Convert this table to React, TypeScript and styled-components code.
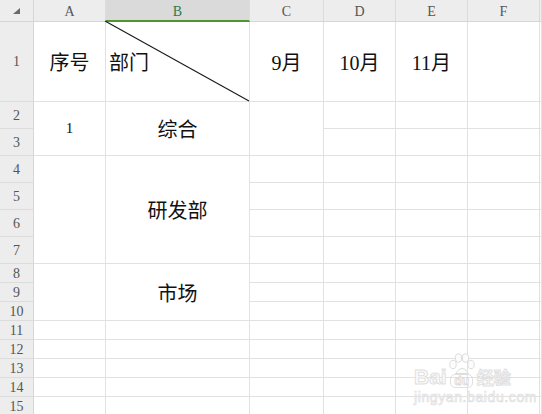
import React from "react";
import styled, { createGlobalStyle } from "styled-components";

const Global = createGlobalStyle`
  html, body { margin: 0; padding: 0; background: #fff; overflow: hidden; }
  body { font-family: "Liberation Serif", "Noto Sans CJK SC", serif; }
  #root { width: 542px; height: 414px; overflow: hidden; }
`;

const COLS = ["A", "B", "C", "D", "E", "F", "G"];
const ROWS = 15;

type Merge = { col: number; row: number; span: number; text?: string; size?: number };

// col index 1 = A ; row index 1 = row 1
const MERGES: Merge[] = [
  { col: 1, row: 2, span: 2, text: "1", size: 15 },
  { col: 2, row: 2, span: 2, text: "综合" },
  { col: 3, row: 2, span: 2 },
  { col: 1, row: 4, span: 4 },
  { col: 2, row: 4, span: 4, text: "研发部" },
  { col: 1, row: 8, span: 3 },
  { col: 2, row: 8, span: 3, text: "市场" },
];

const ROW1: Record<number, string> = { 1: "序号", 3: "9月", 4: "10月", 5: "11月" };

const Sheet = styled.div`
  display: grid;
  grid-template-columns: 34px 72px 144px 74px 72px 72px 72px 1fr;
  grid-template-rows: 22px 80px repeat(6, 27px) repeat(8, 19px);
  width: 542px;
  height: 414px;
  overflow: hidden;
  position: relative;
  background: #fff;
`;

const Corner = styled.div`
  grid-column: 1;
  grid-row: 1;
  background: #ededed;
  border-right: 1px solid #d6d6d6;
  border-bottom: 1px solid #d6d6d6;
  box-sizing: border-box;
  position: relative;
`;

const CornerMark = styled.div`
  position: absolute;
  left: 13px;
  top: 8px;
  width: 7px;
  height: 6px;
  background: #6a6a6a;
  clip-path: polygon(100% 0, 100% 100%, 0 100%);
`;

const ColHead = styled.div<{ $col: number; $active?: boolean }>`
  grid-column: ${(p) => p.$col + 1};
  grid-row: 1;
  box-sizing: border-box;
  background: ${(p) => (p.$active ? "#dadada" : "#ededed")};
  border-right: 1px solid #dcdcdc;
  border-bottom: ${(p) => (p.$active ? "2px solid #4f9633" : "1px solid #d6d6d6")};
  color: ${(p) => (p.$active ? "#2f7a4a" : "#555")};
  font-family: "Liberation Serif", serif;
  font-size: 14px;
  display: flex;
  align-items: center;
  justify-content: center;
  padding-top: 3px;
`;

const RowHead = styled.div<{ $row: number }>`
  grid-column: 1;
  grid-row: ${(p) => p.$row + 1};
  box-sizing: border-box;
  background: #ededed;
  border-right: 1px solid #d6d6d6;
  border-bottom: 1px solid #dcdcdc;
  color: #555;
  font-family: "Liberation Serif", serif;
  font-size: 14px;
  display: flex;
  align-items: center;
  justify-content: center;
  padding-top: 1px;
`;

const Cell = styled.div<{ $col: number; $row: number; $span?: number; $left?: boolean; $size?: number }>`
  grid-column: ${(p) => p.$col + 1};
  grid-row: ${(p) => p.$row + 1} / span ${(p) => p.$span ?? 1};
  box-sizing: border-box;
  border-right: 1px solid #e1e1e1;
  border-bottom: 1px solid #e1e1e1;
  position: relative;
  display: flex;
  align-items: center;
  justify-content: ${(p) => (p.$left ? "flex-start" : "center")};
  padding-left: ${(p) => (p.$left ? "3px" : "0")};
  font-family: "Liberation Serif", "Noto Sans CJK SC", serif;
  font-size: ${(p) => p.$size ?? 20}px;
  color: #111;
  white-space: nowrap;
`;

const Diagonal = styled.svg`
  position: absolute;
  left: -1px;
  top: -1px;
  width: calc(100% + 1px);
  height: calc(100% + 1px);
  overflow: visible;
  pointer-events: none;
`;

const Watermark = styled.div`
  position: absolute;
  left: 414px;
  top: 353px;
  width: 120px;
  display: flex;
  flex-direction: column;
  align-items: flex-start;
  pointer-events: none;
`;

const LogoRow = styled.div`
  display: flex;
  align-items: flex-end;
  height: 35px;
`;

const Outlined = styled.span<{ $size: number }>`
  font-family: "Liberation Sans", "Noto Sans CJK SC", sans-serif;
  font-weight: bold;
  font-size: ${(p) => p.$size}px;
  line-height: 1;
  color: #fcfcfc;
  -webkit-text-stroke: 1px #e0e0e0;
  margin-bottom: 1px;
`;

const PawBox = styled.div`
  display: flex;
  flex-direction: column;
  align-items: center;
  margin: 0 1px;
`;

const DuBox = styled.span`
  font-family: "Liberation Sans", sans-serif;
  font-weight: bold;
  font-size: 12px;
  line-height: 12px;
  color: #fcfcfc;
  -webkit-text-stroke: 0.8px #dadada;
  border: 1px solid #e0e0e0;
  border-radius: 5px;
  padding: 0 3px;
`;

const Url = styled.div`
  font-family: "Liberation Sans", sans-serif;
  font-size: 14px;
  line-height: 12px;
  letter-spacing: 0.6px;
  white-space: nowrap;
  color: #fcfcfc;
  -webkit-text-stroke: 0.7px #dedede;
  margin-top: 3px;
`;

const isCovered = (col: number, row: number) =>
  MERGES.some((m) => m.col === col && row >= m.row && row < m.row + m.span);

export default function App() {
  const cells: React.ReactNode[] = [];
  for (let r = 1; r <= ROWS; r++) {
    for (let c = 1; c <= COLS.length; c++) {
      const merge = MERGES.find((m) => m.col === c && m.row === r);
      if (merge) {
        cells.push(
          <Cell key={`${c}-${r}`} $col={c} $row={r} $span={merge.span} $size={merge.size}>
            {merge.text}
          </Cell>
        );
        continue;
      }
      if (isCovered(c, r)) continue;
      if (r === 1 && c === 2) {
        cells.push(
          <Cell key={`${c}-${r}`} $col={c} $row={r} $left>
            部门
            <Diagonal viewBox="0 0 100 100" preserveAspectRatio="none">
              <line x1="0" y1="0" x2="100" y2="100" stroke="#1a1a1a" strokeWidth="1.1" vectorEffect="non-scaling-stroke" />
            </Diagonal>
          </Cell>
        );
        continue;
      }
      cells.push(
        <Cell key={`${c}-${r}`} $col={c} $row={r}>
          {r === 1 ? ROW1[c] : null}
        </Cell>
      );
    }
  }

  return (
    <>
      <Global />
      <Sheet>
        <Corner>
          <CornerMark />
        </Corner>
        {COLS.map((name, i) => (
          <ColHead key={name} $col={i + 1} $active={name === "B"}>
            {name === "G" ? "" : name}
          </ColHead>
        ))}
        {Array.from({ length: ROWS }, (_, i) => (
          <RowHead key={i} $row={i + 1}>
            {i + 1}
          </RowHead>
        ))}
        {cells}
        <Watermark>
          <LogoRow>
            <Outlined $size={21}>Bai</Outlined>
            <PawBox>
              <svg width="28" height="21" viewBox="0 0 28 21">
                <g fill="#fcfcfc" stroke="#dcdcdc" strokeWidth="1">
                  <ellipse cx="5" cy="11.5" rx="3.2" ry="4.2" />
                  <ellipse cx="10.5" cy="5" rx="3.2" ry="4.2" />
                  <ellipse cx="17.5" cy="5" rx="3.2" ry="4.2" />
                  <ellipse cx="23" cy="11.5" rx="3.2" ry="4.2" />
                  <path d="M7.5 20.5 Q14 10 20.5 20.5 Z" />
                </g>
              </svg>
              <DuBox>du</DuBox>
            </PawBox>
            <Outlined $size={17}>经验</Outlined>
          </LogoRow>
          <Url>jingyan.baidu.com</Url>
        </Watermark>
      </Sheet>
    </>
  );
}
